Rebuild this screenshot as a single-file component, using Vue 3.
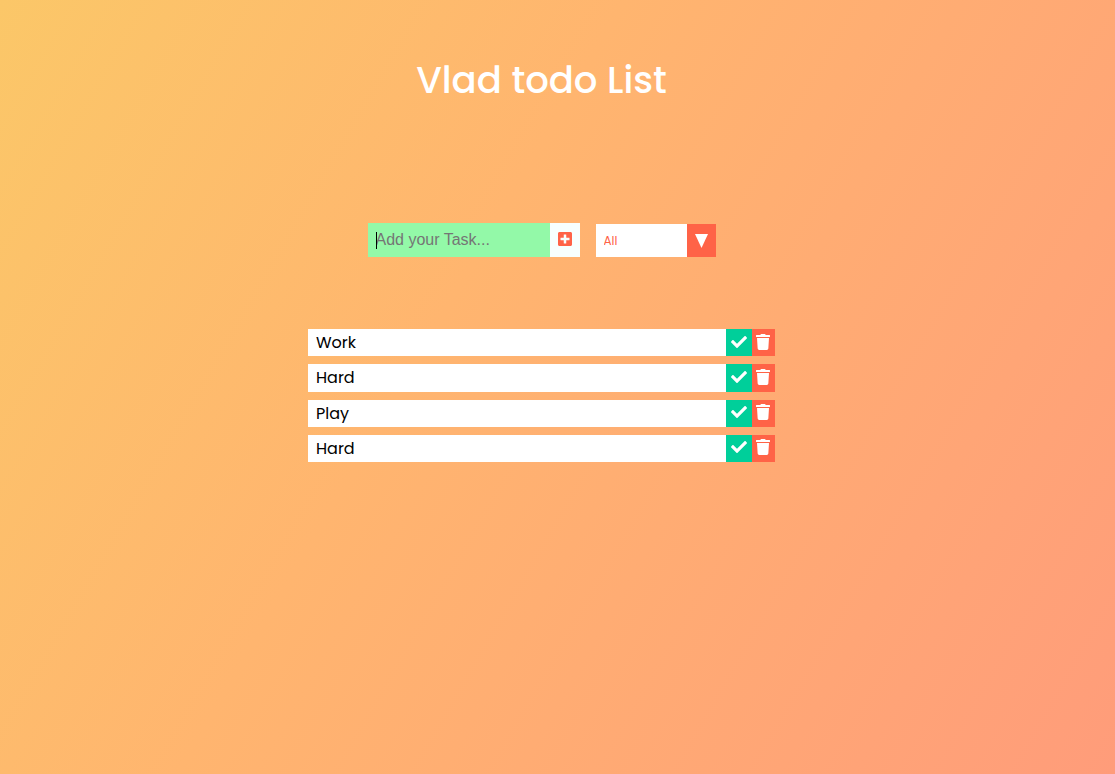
<script setup>
import { ref, computed } from 'vue'

const draft = ref('')
const focused = ref(true)
const filter = ref('all')
const todos = ref([
  { id: 1, text: 'Work', done: false },
  { id: 2, text: 'Hard', done: false },
  { id: 3, text: 'Play', done: false },
  { id: 4, text: 'Hard', done: false }
])

const visible = computed(() =>
  todos.value.filter((t) => filter.value === 'all' || (filter.value === 'completed') === t.done)
)

function add() {
  const text = draft.value.trim()
  if (!text) return
  todos.value.push({ id: Date.now(), text, done: false })
  draft.value = ''
}

function remove(id) {
  todos.value = todos.value.filter((t) => t.id !== id)
}
</script>

<template>
  <div class="page">
    <header class="header">
      <h1>Vlad todo List</h1>
    </header>
    <main>
      <form class="controls" @submit.prevent="add">
        <div class="field">
          <input
            v-model="draft"
            type="text"
            class="task-input"
            placeholder="Add your Task..."
            aria-label="Add your Task"
            @focus="focused = true"
            @blur="focused = false"
          />
          <span v-if="focused && !draft" class="caret" aria-hidden="true"></span>
        </div>
        <button class="add" type="submit" aria-label="Add task">
          <svg viewBox="0 0 448 512" aria-hidden="true">
            <path d="M400 32H48C21.500 32 0 53.500 0 80v352c0 26.500 21.500 48 48 48h352c26.500 0 48-21.500 48-48V80c0-26.500-21.500-48-48-48zm-32 252c0 6.600-5.400 12-12 12h-92v92c0 6.600-5.400 12-12 12h-56c-6.600 0-12-5.400-12-12v-92H92c-6.600 0-12-5.400-12-12v-56c0-6.600 5.400-12 12-12h92v-92c0-6.600 5.400-12 12-12h56c6.600 0 12 5.400 12 12v92h92c6.600 0 12 5.400 12 12v56z" />
          </svg>
        </button>
        <div class="select">
          <select v-model="filter" aria-label="Filter tasks">
            <option value="all">All</option>
            <option value="completed">Completed</option>
            <option value="uncompleted">Uncompleted</option>
          </select>
          <span class="arrow" aria-hidden="true">
            <svg viewBox="0 0 13 14"><path d="M0 0H13L6.500 14Z" /></svg>
          </span>
        </div>
      </form>
      <ul class="list">
        <li v-for="todo in visible" :key="todo.id" class="todo" :class="{ done: todo.done }">
          <span class="text">{{ todo.text }}</span>
          <button class="check" type="button" aria-label="Complete task" @click="todo.done = !todo.done">
            <svg viewBox="0 0 512 512" aria-hidden="true">
              <path d="M173.898 439.404l-166.400-166.400c-9.997-9.997-9.997-26.206 0-36.204l36.203-36.204c9.997-9.998 26.207-9.998 36.204 0L192 312.690 432.095 72.596c9.997-9.997 26.207-9.997 36.204 0l36.203 36.204c9.997 9.997 9.997 26.206 0 36.204l-294.400 294.401c-9.998 9.997-26.207 9.997-36.204-.001z" />
            </svg>
          </button>
          <button class="trash" type="button" aria-label="Delete task" @click="remove(todo.id)">
            <svg viewBox="0 0 448 512" aria-hidden="true">
              <path d="M432 32H312l-9.400-18.700A24 24 0 0 0 281.100 0H166.800a23.720 23.720 0 0 0-21.400 13.300L136 32H16A16 16 0 0 0 0 48v32a16 16 0 0 0 16 16h416a16 16 0 0 0 16-16V48a16 16 0 0 0-16-16zM53.200 467a48 48 0 0 0 47.900 45h245.800a48 48 0 0 0 47.900-45L416 128H32z" />
            </svg>
          </button>
        </li>
      </ul>
    </main>
  </div>
</template>

<style>
body {
  margin: 0;
}
</style>

<style scoped>
.page {
  box-sizing: border-box;
  min-height: 100vh;
  padding-right: 32px;
  background: linear-gradient(120deg, #fbc768, #ffb56f 40%, #ff9c7a);
  font-family: Poppins, "Open Sans", sans-serif;
}

.header {
  display: flex;
  justify-content: center;
  padding-top: 50px;
}

h1 {
  margin: 0;
  color: #fff;
  font-size: 37px;
  font-weight: 500;
  line-height: 60px;
}

.controls {
  display: flex;
  justify-content: center;
  align-items: flex-end;
  padding-top: 113px;
}

.field {
  position: relative;
  display: flex;
}

.task-input {
  box-sizing: border-box;
  width: 182px;
  height: 34px;
  padding: 0 8px;
  border: none;
  border-radius: 0;
  outline: none;
  background: #93f9a8;
  color: #000;
  font: 16px "Liberation Sans", Arial, sans-serif;
}

.task-input::placeholder {
  color: #757575;
  opacity: 1;
}

.caret {
  position: absolute;
  left: 8px;
  top: 9px;
  width: 1px;
  height: 17px;
  background: #000;
}

button {
  display: flex;
  justify-content: center;
  align-items: center;
  padding: 0;
  border: none;
  cursor: pointer;
}

button svg {
  height: 16px;
  fill: currentColor;
}

.add {
  width: 30px;
  height: 34px;
  padding-bottom: 2px;
  background: #f7fffe;
  color: #ff6347;
}

.select {
  position: relative;
  display: flex;
  width: 120px;
  margin-left: 16px;
}

select {
  appearance: none;
  width: 100%;
  height: 33px;
  padding: 0 32px 0 8px;
  border: none;
  border-radius: 0;
  outline: none;
  background: #fff;
  color: #ff6347;
  font: 12px Poppins, "Open Sans", sans-serif;
}

.arrow {
  position: absolute;
  inset: 0 0 0 auto;
  display: flex;
  justify-content: center;
  align-items: center;
  width: 29px;
  background: #ff6347;
  pointer-events: none;
}

.arrow svg {
  width: 13px;
  fill: #fff;
}

.list {
  display: grid;
  grid-auto-rows: 1fr;
  gap: 8px;
  box-sizing: border-box;
  width: 467px;
  max-width: 100%;
  min-height: 133px;
  margin: 72px auto 0;
  padding: 0;
  list-style: none;
}

.todo {
  display: flex;
  background: #fff;
  color: #000;
  font-size: 16px;
  line-height: 27px;
}

.text {
  flex: 1;
  padding: 0 8px;
}

.done {
  opacity: 0.5;
}

.done .text {
  text-decoration: line-through;
}

.check,
.trash {
  padding-bottom: 2px;
  color: #fff;
}

.check {
  width: 26px;
  background: #00cf9a;
}

.trash {
  justify-content: flex-start;
  width: 23px;
  padding-left: 4px;
  background: #ff6347;
}
</style>
